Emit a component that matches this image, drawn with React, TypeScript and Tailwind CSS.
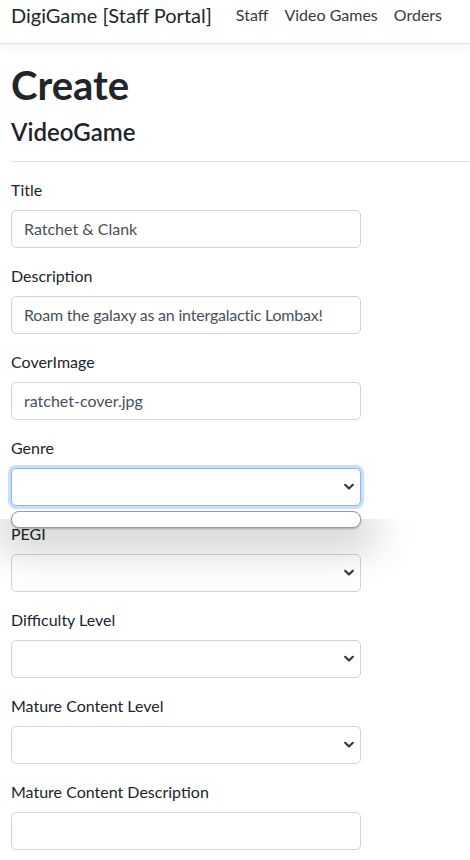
import React from "react";

const font = { fontFamily: 'Lato, "Open Sans", sans-serif' };

function Chevron() {
  return (
    <svg width="10" height="7" viewBox="0 0 10 7" className="absolute right-[6px] top-1/2 -translate-y-1/2">
      <path d="M1.2 1.2 L5 5 L8.8 1.2" fill="none" stroke="#343a40" strokeWidth="2.2" strokeLinecap="round" strokeLinejoin="round" />
    </svg>
  );
}

function TextField({ label, value, tight }: { label: string; value?: string; tight?: boolean }) {
  return (
    <div className="mb-4">
      <div className="text-[16px] leading-[24px] mb-2 text-[#212529] whitespace-nowrap">{label}</div>
      <div
        className={
          tight
            ? "h-[38px] w-[350px] rounded-[5px] border border-[#ced4da] bg-white px-[12px] flex items-center text-[16px] text-[#495057] whitespace-nowrap tracking-[-0.2px]"
            : "h-[38px] w-[350px] rounded-[5px] border border-[#ced4da] bg-white px-[12px] flex items-center text-[16px] text-[#495057] whitespace-nowrap"
        }
      >
        {value}
      </div>
    </div>
  );
}

function SelectField({ label, focused }: { label: string; focused?: boolean }) {
  return (
    <div className="mb-4">
      <div className="text-[16px] leading-[24px] mb-2 text-[#212529] whitespace-nowrap">{label}</div>
      <div
        className={
          focused
            ? "relative h-[38px] w-[350px] rounded-[5px] border border-[#86b7fe] bg-white shadow-[0_0_0_3px_rgba(13,110,253,0.22)]"
            : "relative h-[38px] w-[350px] rounded-[5px] border border-[#ced4da] bg-white"
        }
      >
        <Chevron />
      </div>
    </div>
  );
}

export default function App() {
  return (
    <div className="relative min-h-[860px] w-[470px] overflow-hidden bg-white" style={font}>
      <nav className="h-[44px] border-b border-[#dee2e6] shadow-[0_4px_12px_rgba(0,0,0,0.05)] bg-white flex items-start px-[11px] whitespace-nowrap">
        <span className="text-[20px] leading-[30px] text-[#212529]">DigiGame [Staff Portal]</span>
        <div className="flex ml-[24px] mt-[3px] text-[16px] leading-[24px] text-[#3a3a3a] gap-[16px]">
          <span>Staff</span>
          <span>Video Games</span>
          <span>Orders</span>
        </div>
      </nav>
      <main className="px-[11px] pt-[17px]">
        <h1 className="text-[40px] leading-[48px] font-bold text-[#212529] mb-[8px]">Create</h1>
        <h4 className="text-[24px] leading-[29px] font-semibold text-[#212529]">VideoGame</h4>
        <div className="mt-[15px] mb-[16px] h-px bg-[#e3e3e3] -mr-[11px]" />
        <TextField label="Title" value="Ratchet & Clank" />
        <TextField label="Description" value="Roam the galaxy as an intergalactic Lombax!" tight />
        <TextField label="CoverImage" value="ratchet-cover.jpg" />
        <SelectField label="Genre" focused />
        <SelectField label="PEGI" />
        <SelectField label="Difficulty Level" />
        <SelectField label="Mature Content Level" />
        <TextField label="Mature Content Description" />
      </main>
      <div className="pointer-events-none absolute left-0 top-[519px] h-[130px] w-[470px] overflow-hidden">
        <div className="absolute left-[11px] top-[-10px] h-[10px] w-[350px] shadow-[0_16px_40px_14px_rgba(0,0,0,0.2)]" />
      </div>
      <div className="absolute left-[11px] top-[511px] h-[17px] w-[350px] rounded-[8px] border border-[#9a9a9a] bg-white shadow-[0_1px_2px_rgba(0,0,0,0.25)]" />
    </div>
  );
}
